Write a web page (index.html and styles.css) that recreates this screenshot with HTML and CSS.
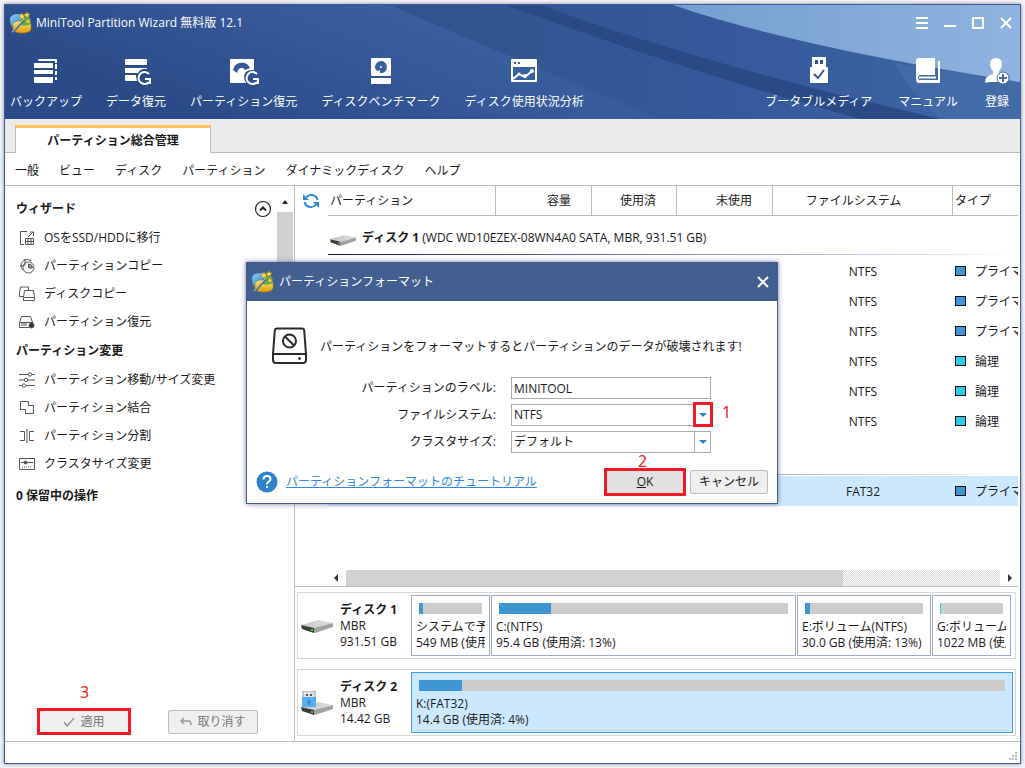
FILE: index.html
```html
<!DOCTYPE html>
<html lang="ja">
<head>
<meta charset="utf-8">
<title>MiniTool Partition Wizard</title>
<link rel="stylesheet" href="styles.css">
</head>
<body>
<svg class="defs" aria-hidden="true">
  <defs>
    <linearGradient id="gBlue" x1="0" y1="0" x2="1" y2="1"><stop offset="0" stop-color="#8fd3f5"/><stop offset="1" stop-color="#1d7fc4"/></linearGradient>
    <linearGradient id="gGold" x1="0" y1="0" x2="0" y2="1"><stop offset="0" stop-color="#ffe96b"/><stop offset="1" stop-color="#d99a06"/></linearGradient>
    <linearGradient id="gDisk" x1="0" y1="0" x2="1" y2="0"><stop offset="0" stop-color="#c4c4c4"/><stop offset="1" stop-color="#dedede"/></linearGradient>
    <linearGradient id="gBase" x1="0" y1="0.3" x2="1" y2="0"><stop offset="0" stop-color="#2b4b88"/><stop offset="0.3" stop-color="#37599a"/><stop offset="0.55" stop-color="#3c639f"/><stop offset="1" stop-color="#355694"/></linearGradient>
    <linearGradient id="gMid" x1="0" y1="0" x2="1" y2="0"><stop offset="0" stop-color="#30538c"/><stop offset="0.5" stop-color="#35589a"/><stop offset="1" stop-color="#3d66a4"/></linearGradient>
    <linearGradient id="gSky" x1="0" y1="0" x2="1" y2="0"><stop offset="0" stop-color="#749fd0"/><stop offset="1" stop-color="#90b3df"/></linearGradient>
  </defs>
  <symbol id="app" viewBox="0 0 22 22">
    <path d="M0 7 Q1 2 8 2 L13 2 L11 9 L2 15 Q0 12 0 7Z" fill="url(#gBlue)"/>
    <path d="M3 13 Q3 9 12 9 Q21 9 21 13 V17 Q20 21 12 21 Q4 21 3 17Z" fill="url(#gGold)" stroke="#b98207" stroke-width=".5"/>
    <path d="M11 8 Q14 4 20 6 L21 12 Q15 15 11 13Z" fill="#5cab4f"/>
    <path d="M2 21 L14 8" stroke="#5b6472" stroke-width="2.2"/><path d="M2 20 L14 7" stroke="#dfe3e8" stroke-width=".8"/>
    <path d="M12 1l1 2.200 2.400.2-1.800 1.600.6 2.400-2.200-1.300-2 1.300.5-2.400-1.800-1.600 2.400-.2zM17 0l.9 1.900 2.100.2-1.600 1.400.5 2.100-1.900-1.100-1.800 1.100.4-2.100L14 2.100l2.100-.2zM18 7l.7 1.500 1.700.2-1.300 1.100.4 1.700-1.500-.9-1.500.9.4-1.700-1.300-1.100 1.700-.2z" fill="#ffe14a" stroke="#c99410" stroke-width=".5"/>
  </symbol>
  <symbol id="disk" viewBox="0 0 32 14">
    <path d="M0 6 L17 1 L32 4 L13 9Z" fill="url(#gDisk)"/>
    <path d="M0 6 L13 9 V14 L1 10Z" fill="#3b3b3b"/><path d="M13 9 L32 4 V8 L14 14 H13Z" fill="#a2a2a2"/>
    <rect x="10" y="10" width="2" height="2" fill="#4ecb3c"/>
  </symbol>
</svg>

<div class="window">
  <header class="header">
    <svg class="header-art" viewBox="0 0 1015 114" preserveAspectRatio="none" aria-hidden="true">
      <rect width="1015" height="114" fill="url(#gBase)"/>
      <path d="M385 0 Q500 50 655 114 H1015 V0Z" fill="url(#gMid)"/>
      <path d="M500 0 Q680 66 855 114 H935 Q700 60 535 0Z" fill="#2a4a86"/>
      <path d="M890 58 L1015 77 V114 H935 Q900 80 890 58Z" fill="#446da9" opacity=".7"/>
      <path d="M668 0 Q790 42 1015 77 V0Z" fill="url(#gSky)"/>
    </svg>
    <div class="titlebar">
      <svg class="app-icon"><use href="#app"/></svg>
      <span class="title">MiniTool Partition Wizard 無料版 12.1</span>
      <div class="win-controls">
        <button aria-label="メニュー"><svg width="14" height="14"><path d="M1 2h12M1 7h12M1 12h12" stroke="#fff" stroke-width="2"/></svg></button>
        <button aria-label="最小化"><svg width="14" height="14"><path d="M1 10h12" stroke="#fff" stroke-width="2"/></svg></button>
        <button aria-label="最大化"><svg width="14" height="14"><path d="M2 2h10v10H2z" fill="none" stroke="#fff" stroke-width="2"/></svg></button>
        <button aria-label="閉じる"><svg width="14" height="14"><path d="M2 2l10 10M12 2L2 12" stroke="#fff" stroke-width="2"/></svg></button>
      </div>
    </div>
    <nav class="toolbar">
      <button><svg width="30" height="30"><g fill="#fff"><path d="M8 2h17q1 0 1 1v3h-2V4H7q0-2 1-2zM24 7h2v5h-2zM24 14h2v4h-2zM24 20h2v3h-2z"/><path d="M4 6h17q1 0 1 1v4H3V7q0-1 1-1zM3 13h19v4H3zM3 20h19v5q0 1-1 1H4q-1 0-1-1z"/></g></svg><span>バックアップ</span></button>
      <button><svg width="30" height="30"><g fill="#fff"><path d="M5 2h20q1 0 1 1v5H4V3q0-1 1-1zM4 11h22v1q-6-1-9 4H4zM4 18h11q0 3 1 6H5q-1 0-1-1z"/></g><path d="M28 17a6 6 0 1 0 0 8M29 27v-5h-5" fill="none" stroke="#fff" stroke-width="2"/></svg><span>データ復元</span></button>
      <button><svg width="32" height="30"><path d="M2 2h24v11q-9-1-10 6 0 4 2 7H3q-1 0-1-1z" fill="#fff"/><path d="M5 13a9 9 0 0 1 17-2l-5 2a4 4 0 0 0-7 0l-1 3z" fill="#36589a"/><circle cx="14" cy="13" r="2" fill="#fff"/><path d="M29 17a6 6 0 1 0 0 8M30 27v-5h-5" fill="none" stroke="#fff" stroke-width="2"/></svg><span>パーティション復元</span></button>
      <button><svg width="30" height="30"><path d="M6 1h18q1 0 1 1v16q0 1-1 1H6q-1 0-1-1V2q0-1 1-1zM5 21h20v5q0 1-1 1H6q-1 0-1-1z" fill="#fff"/><path d="M9 10a6 6 0 1 1 5 6v-3l-2 1-2-1q-1-1-1-3" fill="#3a5f9e"/><circle cx="15" cy="10" r="1" fill="#fff"/></svg><span>ディスクベンチマーク</span></button>
      <button><svg width="30" height="30"><path d="M3 2h24q1 0 1 1v21q0 1-1 1H3q-1 0-1-1V3q0-1 1-1z" fill="#fff"/><path d="M5 5h2v2H5zM9 5h2v2H9zM4 10h22v13H4z" fill="#39609e"/><path d="M4 22l6-5 6 3 7-6" fill="none" stroke="#fff" stroke-width="2"/><circle cx="10" cy="17" r="1.500" fill="#fff"/><circle cx="16" cy="19" r="2" fill="#fff"/><circle cx="23" cy="14" r="2" fill="#fff"/></svg><span>ディスク使用状況分析</span></button>
      <span class="grow"></span>
      <button><svg width="30" height="30"><path d="M8 0h14v10h1q1 0 1 1v14q0 1-1 1H7q-1 0-1-1V11q0-1 1-1h1z" fill="#fff"/><path d="M10 2h10v7H10z" fill="#34568f"/><path d="M10 2h10v1H10zM10 7h10v2H10zM10 2h1v6h-1zM14 2h2v6h-2zM19 2h1v6h-1z" fill="#fff"/><path d="M10 17l4 4 6-8" fill="none" stroke="#34568f" stroke-width="2"/></svg><span>ブータブルメディア</span></button>
      <button><svg width="30" height="30"><path d="M6 1h16v17H7q-2 0-2 2.500T7 23h18V4h2v21q0 1-1 1H6q-3 0-3-4V4q0-3 3-3z" fill="#fff"/><path d="M6 20.500h17" stroke="#fff" stroke-width="2"/></svg><span>マニュアル</span></button>
      <button><svg width="26" height="30"><path d="M12 1q6 0 6 6 0 4-3 7v3h-6v-3q-3-3-3-7 0-6 6-6z" fill="#fff"/><path d="M1 25q0-6 8-8h5l3 8H5q-4 1-4 0z" fill="#fff"/><circle cx="19" cy="21" r="6" fill="#fff" stroke="#416aa7"/><path d="M19 17v8M15 21h8" stroke="#416aa7" stroke-width="2"/></svg><span>登録</span></button>
    </nav>
  </header>

  <div class="tabs"><button class="tab">パーティション総合管理</button></div>
  <nav class="menubar">
    <button>一般</button><button>ビュー</button><button>ディスク</button><button>パーティション</button><button>ダイナミックディスク</button><button>ヘルプ</button>
  </nav>

  <div class="main">
    <aside class="side">
      <div class="side-scroll">
        <div class="side-list">
          <div class="side-head"><h2>ウィザード</h2><button aria-label="折りたたむ"><svg width="18" height="18" fill="none" stroke="#222"><circle cx="9" cy="9" r="7.500" stroke-width="1.200"/><path d="M6 10.500l3-3 3 3" stroke-width="2"/></svg></button></div>
          <button class="item"><svg width="16" height="16"><path d="M8 1.500H1.500v13H5M11 2h3.500v4M14 2l-5 5M6.500 8.500h8v6h-8zM6.500 11.500h8M9 9v6M12 9v6"/></svg>OSをSSD/HDDに移行</button>
          <button class="item"><svg width="16" height="16"><path d="M4 12A6 6 0 1 1 12 3M6 1v6l-5 1"/><circle cx="9.500" cy="9.500" r="5.500"/><path d="M9.500 6v4h4q0-4-4-4z" fill="#999"/></svg>パーティションコピー</button>
          <button class="item"><svg width="16" height="16"><path d="M5 10.500H.5v-4l1-5.500h8v3M5.500 4.500h9l1 7v3h-11v-3zM5 11.500h10"/></svg>ディスクコピー</button>
          <button class="item"><svg width="16" height="16"><path d="M.5 8.500l2-6h9l2 6M10 13.500H.5v-5h14"/><path d="M3 9v3M5 9v3M7 9v3"/><circle cx="12.500" cy="11.500" r="2.500" fill="#333"/></svg>パーティション復元</button>
          <div class="side-head"><h2>パーティション変更</h2></div>
          <button class="item"><svg width="16" height="16"><path d="M0 2.500h9M13 2.500h3M0 8h5M9 8h7M0 13.500h3M7 13.500h9"/><circle cx="11" cy="2.500" r="1.700"/><circle cx="7" cy="8" r="1.700"/><circle cx="5" cy="13.500" r="1.700"/></svg>パーティション移動/サイズ変更</button>
          <button class="item"><svg width="16" height="16"><path d="M1.500 1.500h8v4h5v8h-8v-4h-5z"/></svg>パーティション結合</button>
          <button class="item"><svg width="16" height="16"><path d="M8 1v14M1 3.500h4.500v9H1M15 3.500h-4.500v9H15"/></svg>パーティション分割</button>
          <button class="item"><svg width="16" height="16"><path d="M.5 2.500h15v11H.5zM2 6.500h12"/><circle cx="6.500" cy="6.500" r="1.500" fill="#555"/><path d="M3 11h10" stroke-dasharray="1 1"/></svg>クラスタサイズ変更</button>
          <div class="side-head pending"><h2>0 保留中の操作</h2></div>
        </div>
        <div class="vbar"><svg width="16" height="16"><path d="M5 10l3-4 3 4z" fill="#222"/></svg><div class="vthumb"></div></div>
      </div>
      <div class="side-foot">
        <div class="marked"><span class="num above">3</span><button class="btn flat" disabled><svg width="12" height="12"><path d="M1 6l3 4 7-8" fill="none" stroke="#999" stroke-width="1.500"/></svg>適用</button></div>
        <button class="btn" disabled><svg width="12" height="12"><path d="M1 5h7q3 0 3 4M4 2L1 5l3 3" fill="none" stroke="#999" stroke-width="1.500"/></svg>取り消す</button>
      </div>
    </aside>

    <section class="content">
      <div class="grid-area">
        <button class="refresh" aria-label="更新"><svg width="18" height="18"><path d="M4 5.500a6.500 6.500 0 0 1 11.500 2.500M14 12.500a6.500 6.500 0 0 1-11.500-2.500" fill="none" stroke="#2e8ade" stroke-width="2"/><path d="M1 2v6h6zM17 16v-6h-6z" fill="#2e8ade"/></svg></button>
        <table class="vols">
          <colgroup><col class="c-part"><col class="c-cap"><col class="c-used"><col class="c-free"><col class="c-fs"><col class="c-type"></colgroup>
          <thead><tr><th>パーティション</th><th class="r">容量</th><th class="r">使用済</th><th class="r">未使用</th><th class="fs">ファイルシステム</th><th class="type">タイプ</th></tr></thead>
          <tbody>
            <tr class="disk-row"><td colspan="6"><svg class="disk-icon"><use href="#disk"/></svg><b>ディスク 1</b> (WDC WD10EZEX-08WN4A0 SATA, MBR, 931.51 GB)</td></tr>
            <tr><td colspan="4"></td><td class="c">NTFS</td><td><i class="sw pri"></i>プライマリ</td></tr>
            <tr><td colspan="4"></td><td class="c">NTFS</td><td><i class="sw pri"></i>プライマリ</td></tr>
            <tr><td colspan="4"></td><td class="c">NTFS</td><td><i class="sw pri"></i>プライマリ</td></tr>
            <tr><td colspan="4"></td><td class="c">NTFS</td><td><i class="sw log"></i>論理</td></tr>
            <tr><td colspan="4"></td><td class="c">NTFS</td><td><i class="sw log"></i>論理</td></tr>
            <tr><td colspan="4"></td><td class="c">NTFS</td><td><i class="sw log"></i>論理</td></tr>
            <tr class="disk-row"><td colspan="6"></td></tr>
            <tr class="sel"><td colspan="4"></td><td class="c">FAT32</td><td><i class="sw pri"></i>プライマリ</td></tr>
          </tbody>
        </table>
      </div>
      <div class="hbar"><svg width="16" height="16"><path d="M10 4v8L6 8z" fill="#333"/></svg><div class="htrack"><div class="hthumb"></div></div><svg width="16" height="16"><path d="M6 4v8l4-4z" fill="#333"/></svg></div>
      <div class="map">
        <div class="map-disk">
          <svg class="map-icon"><use href="#disk"/></svg>
          <div class="map-info"><b>ディスク 1</b><span>MBR</span><span>931.51 GB</span></div>
          <div class="parts four">
            <div class="part"><div class="bar"><div style="width:6%"></div></div><p>システムで予約</p><p>549 MB (使用</p></div>
            <div class="part"><div class="bar"><div style="width:18%"></div></div><p>C:(NTFS)</p><p>95.4 GB (使用済: 13%)</p></div>
            <div class="part"><div class="bar"><div style="width:4%"></div></div><p>E:ボリューム(NTFS)</p><p>30.0 GB (使用済: 13%)</p></div>
            <div class="part"><div class="bar cyan"><div style="width:2%"></div></div><p>G:ボリューム(N</p><p>1022 MB (使用</p></div>
          </div>
        </div>
        <div class="map-disk">
          <svg class="map-icon usb" viewBox="0 0 32 24"><use href="#disk" y="10" width="32" height="14"/><rect x="2" y="0" width="12" height="7" fill="#e4e4e4" stroke="#999"/><path d="M5 3h2v2H5zM9 3h2v2H9z" fill="#555"/><path d="M1 6h14v10H1z" fill="#58aef0"/><path d="M8 8v6M6 10l2 2 2-2" stroke="#2372bd" fill="none"/></svg>
          <div class="map-info"><b>ディスク 2</b><span>MBR</span><span>14.42 GB</span></div>
          <div class="parts">
            <div class="part chosen"><div class="bar"><div style="width:7.400%"></div></div><p>K:(FAT32)</p><p>14.4 GB (使用済: 4%)</p></div>
          </div>
        </div>
      </div>
    </section>
  </div>
  <footer class="status"><svg width="10" height="10"><path d="M6 0h2v2H6zM3 3h2v2H3zM6 3h2v2H6zM0 6h2v2H0zM3 6h2v2H3zM6 6h2v2H6z" fill="#bbb"/></svg></footer>

  <div class="dialog" role="dialog" aria-labelledby="dlg-title">
    <div class="dlg-bar"><svg class="app-icon"><use href="#app"/></svg><span id="dlg-title">パーティションフォーマット</span><button aria-label="閉じる"><svg width="14" height="14"><path d="M2 2l10 10M12 2L2 12" stroke="#fff" stroke-width="2"/></svg></button></div>
    <form class="dlg-body">
      <div class="warn">
        <svg width="36" height="38" fill="none" stroke="#2b2b2b" stroke-width="2"><path d="M5 1.500h25q2 0 2.200 2L34 27v6q0 3-3 3H4q-3 0-3-3v-6L2.800 3.500q.2-2 2.200-2zM1 27h33"/><circle cx="17.500" cy="14" r="6.500"/><path d="M13 9.500l9 9"/><circle cx="27.500" cy="31.500" r="1" fill="#2b2b2b" stroke-width="1"/></svg>
        <p>パーティションをフォーマットするとパーティションのデータが破壊されます!</p>
      </div>
      <div class="fields">
        <label for="lbl">パーティションのラベル:</label><input id="lbl" type="text" value="MINITOOL">
        <label for="fs">ファイルシステム:</label><div class="pick"><select id="fs"><option>NTFS</option></select><span class="arrow ring"></span><span class="num side-num">1</span></div>
        <label for="cl">クラスタサイズ:</label><div class="pick"><select id="cl"><option>デフォルト</option></select><span class="arrow"></span></div>
      </div>
      <div class="dlg-foot">
        <svg width="22" height="22"><circle cx="11" cy="11" r="10.500" fill="#2f83cd"/><path d="M7.500 8.500q0-3.500 3.500-3.500t3.500 3q0 1.500-1.800 2.600T11 13.500" fill="none" stroke="#fff" stroke-width="2"/><rect x="10" y="15" width="2" height="2" fill="#fff"/></svg>
        <a href="#">パーティションフォーマットのチュートリアル</a>
        <div class="marked ok"><span class="num above">2</span><button type="button" class="btn flat"><span><u>O</u>K</span></button></div>
        <button type="button" class="btn cancel">キャンセル</button>
      </div>
    </form>
  </div>
</div>
</body>
</html>
```

FILE: styles.css
```css
* { box-sizing: border-box; }
body {
  margin: 0;
  height: 100vh;
  padding: 4px;
  background: #f4f4f8;
  color: #1a1a1a;
  font: 12px/16px "Open Sans", "Noto Sans CJK JP", sans-serif;
}
h2, p { margin: 0; font-size: 12px; }
button {
  margin: 0; padding: 0; border: 0;
  background: none; color: inherit; font: inherit;
  white-space: nowrap;
}
svg { display: block; flex: none; }
.defs { position: absolute; width: 0; height: 0; }
.grow { flex: 1; }

.window {
  position: relative;
  height: 100%;
  display: flex;
  flex-direction: column;
  background: #fff;
  border: 1px solid #3f5b93;
  box-shadow: 0 0 4px #8886a8;
  overflow: hidden;
}

.header { position: relative; color: #fff; height: 114px; flex: none; }
.header-art { position: absolute; inset: 0; width: 100%; height: 100%; }
.titlebar { position: relative; display: flex; align-items: center; height: 36px; padding: 0 7px 0 5px; gap: 4px; }
.app-icon { width: 22px; height: 22px; }
.title { flex: 1; }
.win-controls { display: flex; gap: 14px; }
.toolbar { position: relative; display: flex; gap: 24px; padding: 16px 10px 0 5px; }
.toolbar button { display: flex; flex-direction: column; align-items: center; gap: 7px; }
.toolbar .grow { margin: 0 -24px; }
.toolbar .grow ~ button { margin-left: 2px; }

.tabs { display: flex; flex: none; height: 34px; padding: 6px 10px 0; background: #ebebeb; border-bottom: 1px solid #bcbcbc; }
.tab {
  width: 196px; height: 28px;
  background: #fff;
  border: 1px solid #bcbcbc; border-top: 3px solid #fdc35c; border-bottom: 0;
  font-weight: bold;
}
.menubar { display: flex; gap: 20px; flex: none; height: 33px; padding: 3px 10px 0; border-bottom: 1px solid #bcbcbc; }

.main { flex: 1; display: flex; min-height: 0; }
.side { width: 290px; flex: none; display: flex; flex-direction: column; border-right: 1px solid #bcbcbc; border-bottom: 1px solid #bcbcbc; }
.side-scroll { flex: 1; display: flex; min-height: 0; }
.side-list { flex: 1; display: flex; flex-direction: column; padding-top: 8px; }
.side-head { display: flex; align-items: center; justify-content: space-between; height: 30px; padding: 0 5px 0 11px; }
.pending { height: 36px; }
.item { display: flex; align-items: center; gap: 9px; height: 28px; padding-left: 14px; }
.item svg { fill: none; stroke: #555; }
.vbar { width: 16px; margin-right: 1px; padding-top: 8px; }
.vthumb { margin-top: 2px; height: 150px; background: #d0d0d0; }
.side-foot { display: flex; align-items: center; gap: 37px; padding: 0 36px 6px 32px; }

.btn {
  display: flex; align-items: center; justify-content: center; gap: 5px;
  flex: 1; height: 24px;
  background: #efefef; border: 1px solid #bcbcbc; border-radius: 2px;
}
.btn:disabled { color: #777; }
.marked { position: relative; display: flex; width: 94px; height: 27px; border: 3px solid #ed1c24; }
.flat { height: auto; border: 0; border-radius: 0; }
.num { position: absolute; color: #ed1c24; font-family: "Noto Sans", sans-serif; font-size: 16px; line-height: 16px; }
.above { left: 50%; bottom: 100%; margin: 0 0 11px -4px; }

.content { flex: 1; min-width: 0; display: flex; flex-direction: column; padding-right: 2px; border-bottom: 1px solid #bcbcbc; }
.grid-area { flex: 1; display: flex; min-height: 0; overflow: hidden; }
.refresh { width: 33px; height: 30px; padding-left: 7px; flex: none; }
.vols { flex: 1; width: 100%; table-layout: fixed; border-collapse: separate; border-spacing: 0; align-self: flex-start; }
.c-part { width: 168px; } .c-cap { width: 96px; } .c-used { width: 85px; }
.c-free { width: 96px; } .c-fs { width: 180px; } .c-type { width: auto; }
.vols th { height: 30px; padding: 0 2px; font-weight: normal; text-align: left; border-right: 1px solid #bcbcbc; border-bottom: 1px solid #bcbcbc; }
.vols th:last-child { border-right: 0; }
.vols th.r { text-align: right; padding-right: 20px; }
.vols th.fs { text-align: center; padding-right: 20px; }
.vols td { height: 30px; padding: 1px 2px 0; white-space: nowrap; overflow: hidden; }
.vols td.c { text-align: center; }
.vols .disk-row td { height: 40px; padding-top: 3px; background: linear-gradient(90deg, #14145a, #a9a9cc 65%, #fff) left 0 bottom 1px / 100% 1px no-repeat; }
.sel { background: #cce8ff; }
.disk-icon { display: inline-block; width: 26px; height: 12px; margin-right: 6px; vertical-align: -4px; }
.sw { display: inline-block; width: 11px; height: 10px; margin-right: 9px; border: 1px solid #111; }
.pri { background: #3e96d2; }
.log { background: #27cdeb; }

.hbar { display: flex; gap: 2px; flex: none; height: 17px; padding-left: 33px; border-bottom: 1px solid #bcbcbc; }
.htrack { flex: 1; background: repeating-conic-gradient(#d4d4d4 0 25%, #fff 0 50%) 0 0 / 2px 2px; }
.hthumb { width: 76%; height: 16px; background: #d2d2d2; }

.map { display: flex; flex-direction: column; gap: 10px; flex: none; padding: 5px 2px; }
.map-disk { display: flex; align-items: center; height: 67px; border: 1px solid #d8d8d8; padding: 2px 2px 2px 3px; }
.map-icon { width: 32px; height: 14px; }
.usb { height: 24px; }
.map-info { width: 78px; padding-left: 7px; display: flex; flex-direction: column; flex: none; white-space: nowrap; }
.parts { flex: 1; display: grid; min-width: 0; height: 61px; }
.four { grid-template-columns: 79fr 305fr 134fr 79fr; gap: 1px; margin-right: 2px; }
.part { min-width: 0; overflow: hidden; border: 1px solid #9dabc5; padding: 7px 4px 0; white-space: nowrap; }
.chosen { background: #cce8ff; border-color: #3f9ff0; }
.bar { height: 11px; margin: 0 3px 5px; background: #ccc; }
.bar div { height: 11px; background: #3e96d2; }
.cyan div { background: #27cdeb; }
.part p { overflow: hidden; }

.status { flex: none; height: 21px; display: flex; align-items: flex-end; justify-content: flex-end; padding: 1px; }

.dialog {
  position: absolute; left: 241px; top: 257px; width: 532px;
  background: #fff; border: 1px solid #3f5b93; box-shadow: 0 0 5px #7a78a0;
}
.dlg-bar { display: flex; align-items: center; gap: 5px; height: 38px; padding: 0 7px 0 5px; background: #435f90; color: #fff; }
.dlg-bar span { flex: 1; }
.dlg-body { padding: 26px 9px 7px; }
.warn { display: flex; align-items: center; gap: 12px; padding-left: 16px; }
.warn p { padding-top: 2px; white-space: nowrap; }
.fields { display: grid; grid-template-columns: 240px 200px; column-gap: 15px; row-gap: 5px; padding-top: 12px; align-items: center; }
.fields label { text-align: right; }
.fields input, .fields select {
  display: block; width: 100%; height: 22px; margin: 0; padding: 0 2px;
  border: 1px solid #aaa; border-radius: 0; background: #fff;
  color: inherit; font: inherit; appearance: none; outline: 0;
}
.pick { position: relative; }
.arrow { position: absolute; right: 0; top: 0; width: 17px; height: 22px; border: 1px solid #aaa; display: flex; align-items: center; justify-content: center; pointer-events: none; }
.arrow::before { content: ""; border: 4px solid transparent; border-top-color: #2f83cd; border-bottom: 0; }
.ring { right: -2px; top: -2px; width: 20px; height: 25px; border: 3px solid #ed1c24; }
.side-num { left: 100%; top: 0; margin-left: 11px; }
.dlg-foot { display: flex; align-items: center; gap: 8px; padding-top: 15px; }
.dlg-foot a { color: #2f86e0; white-space: nowrap; }
.ok { width: 82px; height: 28px; margin-left: auto; }
.ok .above { margin: 0 0 2px -7px; }
.ok .btn { background: #e1e1e1; }
.cancel { flex: none; width: 78px; margin-left: -4px; }
```
